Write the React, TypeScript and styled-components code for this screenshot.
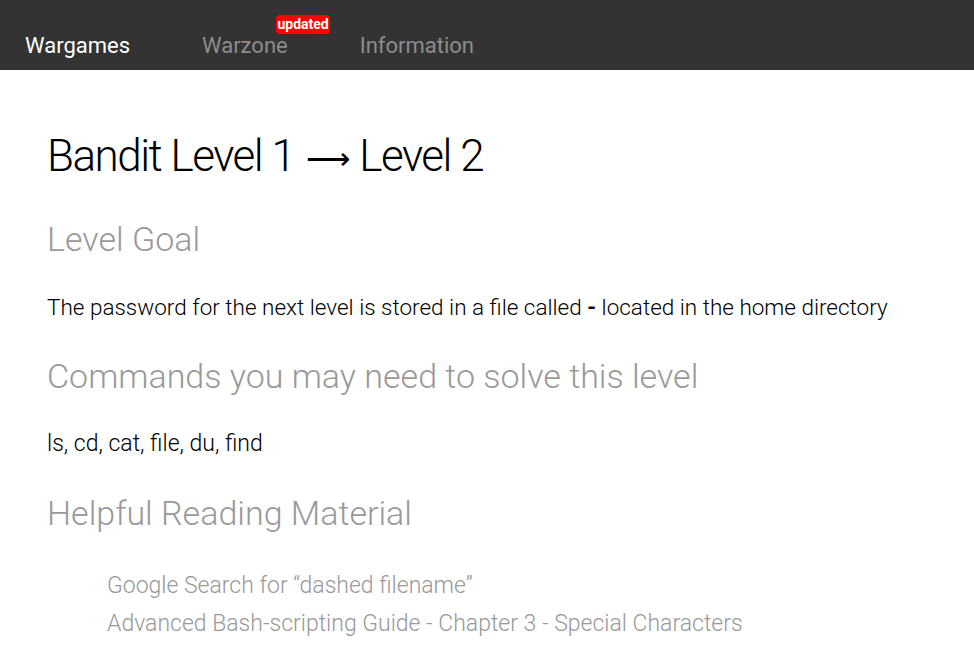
import React from 'react';
import styled, { createGlobalStyle } from 'styled-components';

const GlobalStyle = createGlobalStyle`
  body {
    margin: 0;
    background: #fff;
    font-family: Roboto, "Liberation Sans", sans-serif;
  }
`;

const navItems = [
  { label: 'Wargames', active: true },
  { label: 'Warzone', badge: 'updated' },
  { label: 'Information' },
];

const readings = [
  'Google Search for \u201cdashed filename\u201d',
  'Advanced Bash-scripting Guide - Chapter 3 - Special Characters',
];

const App = () => {
  return (
    <>
      <GlobalStyle />
      <NavBar>
        {navItems.map((item) => (
          <NavItem key={item.label} $active={item.active}>
            {item.label}
            {item.badge && <Badge>{item.badge}</Badge>}
          </NavItem>
        ))}
      </NavBar>
      <Content>
        <Title>
          Bandit Level 1<Arrow>&#x27F6;</Arrow>Level 2
        </Title>
        <SubTitle>Level Goal</SubTitle>
        <Paragraph>
          The password for the next level is stored in a file called <Code>-</Code> located in the home
          directory
        </Paragraph>
        <SubTitle>Commands you may need to solve this level</SubTitle>
        <Paragraph $wide>ls, cd, cat, file, du, find</Paragraph>
        <SubTitle>Helpful Reading Material</SubTitle>
        <LinkList>
          {readings.map((r) => (
            <li key={r}>
              <ReadingLink href="#">{r}</ReadingLink>
            </li>
          ))}
        </LinkList>
      </Content>
    </>
  );
};

const NavBar = styled.nav`
  display: flex;
  align-items: center;
  height: 70px;
  padding: 0 0 0 25px;
  gap: 72px;
  background-color: #333333;
`;

const NavItem = styled.span<{ $active?: boolean }>`
  position: relative;
  padding-top: 20px;
  font-size: 22px;
  font-weight: 400;
  color: ${({ $active }) => ($active ? '#ffffff' : '#8c8c8c')};
`;

const Badge = styled.span`
  position: absolute;
  top: 2px;
  right: -42px;
  padding: 0 1px;
  border-radius: 4px;
  background-color: #ff0000;
  color: #fff;
  font-size: 14px;
  font-weight: 700;
  line-height: 19px;
`;

const Content = styled.main`
  padding: 12px 47px;
  font-weight: 300;
`;

const Title = styled.h1`
  margin: 48px 0 35px;
  font-size: 44px;
  font-weight: 300;
  letter-spacing: -1.5px;
  line-height: 52px;
  color: #000;
`;

const Arrow = styled.span`
  display: inline-block;
  margin: 0 9px 0 12px;
  font-family: "DejaVu Sans", sans-serif;
  font-size: 31px;
  letter-spacing: 0;
  vertical-align: 2px;
`;

const SubTitle = styled.h2`
  margin: 33px 0 0;
  font-size: 34px;
  font-weight: 300;
  line-height: 40px;
  color: #999999;
`;

const Paragraph = styled.p<{ $wide?: boolean }>`
  margin: 32px 0 0;
  font-size: ${({ $wide }) => ($wide ? '23px' : '22.5px')};
  line-height: 32px;
  color: #000;
`;

const Code = styled.code`
  font-family: Roboto, "Liberation Sans", sans-serif;
  font-weight: 700;
`;

const LinkList = styled.ul`
  list-style: none;
  margin: 35px 0 0;
  padding: 0 0 0 60px;

  & > li {
    line-height: 36px;
  }
`;

const ReadingLink = styled.a`
  font-size: 23px;
  color: #999999;
  text-decoration: none;
`;

export default App;
